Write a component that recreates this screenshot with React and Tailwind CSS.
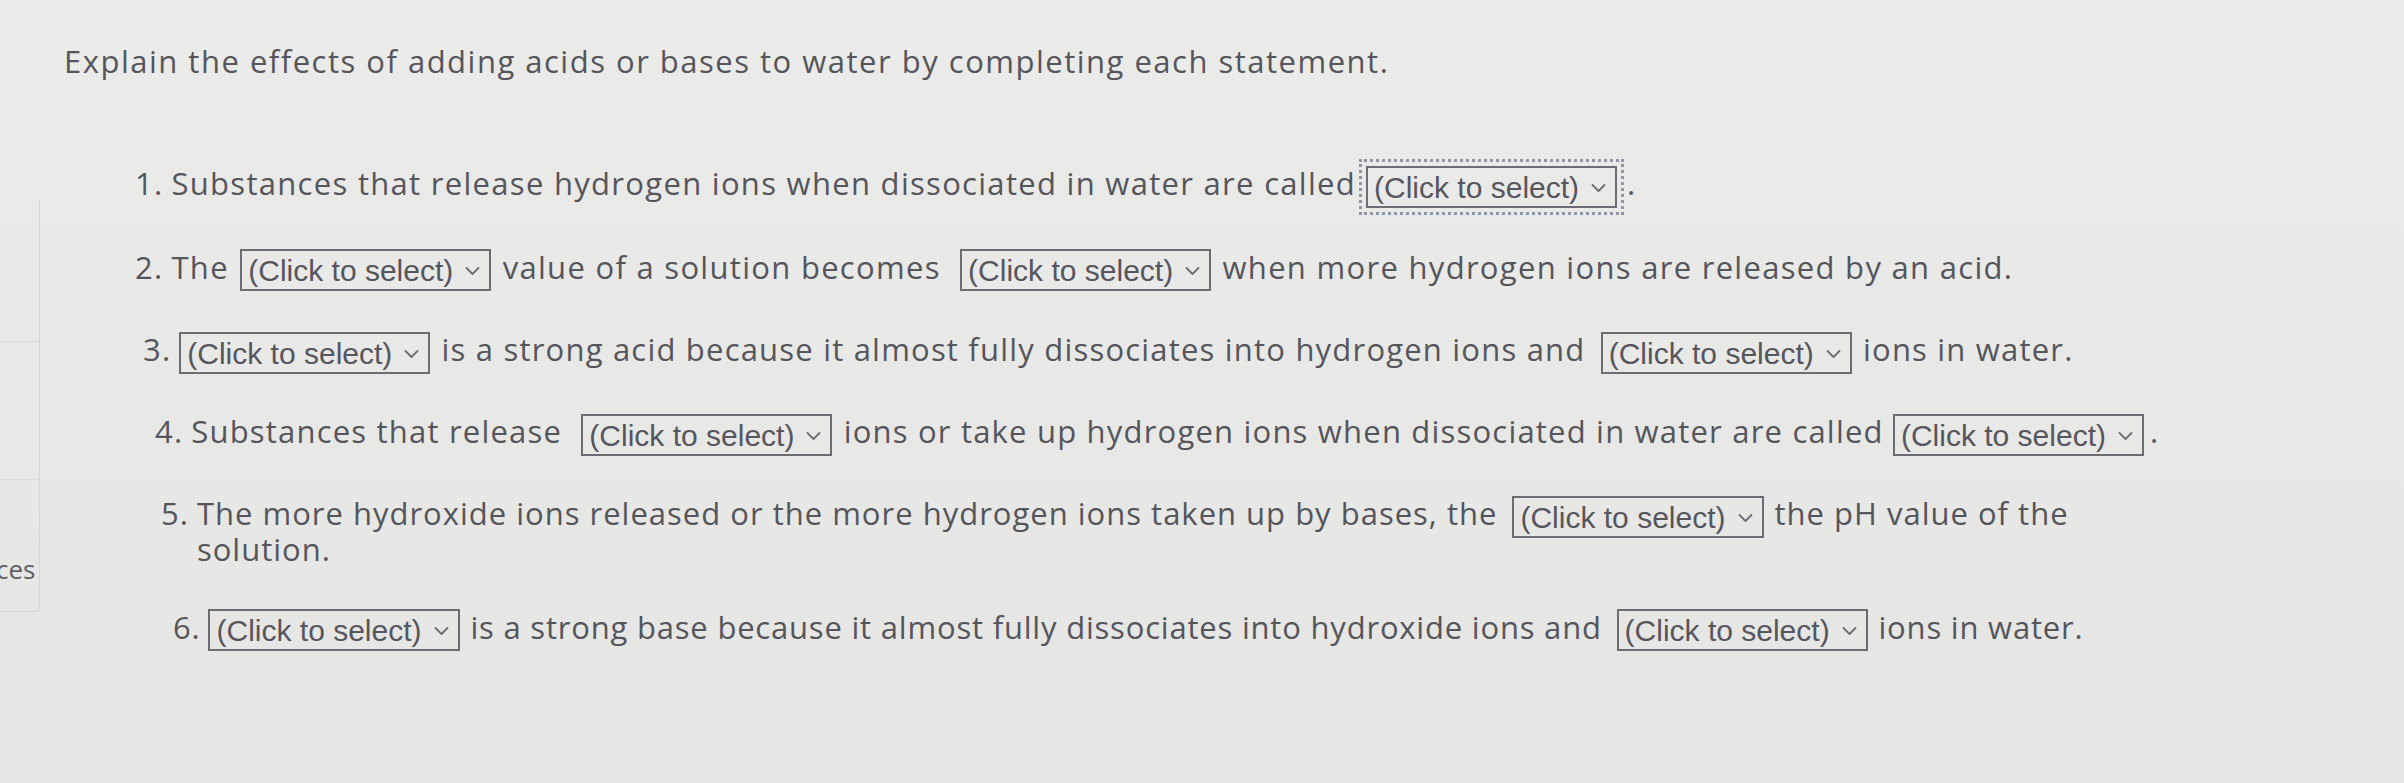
import React from 'react';

// dropdown used inside the statements
const Select = ({ focused = false, className = '' }) => (
  <span
    className={`inline-flex items-center align-middle h-[42px] border-2 border-[#6c6c74] pl-[6px] pr-[9px] font-['Liberation_Sans',Arial,sans-serif] font-normal text-[30px] leading-none tracking-normal text-[#56565e] ${
      focused ? 'outline-[3px] outline-dotted outline-[#8f96a8] outline-offset-[4px]' : ''
    } ${className}`}
  >
    <span className="relative top-[1px]">(Click to select)</span>
    <svg className="ml-[12px] mt-[2px]" width="15" height="10" viewBox="0 0 15 10" fill="none">
      <path d="M1.5 2 L7.5 8 L13.5 2" stroke="#6c6c74" strokeWidth="1.8" strokeLinecap="round" strokeLinejoin="round" />
    </svg>
  </span>
);

const Row = ({ num, children, className = '', textClass = '' }) => (
  <div className={`flex items-baseline ${className}`}>
    <span className="shrink-0 pr-[8px]">{num}.</span>
    <div className={textClass}>{children}</div>
  </div>
);

export default function App() {
  return (
    <div className="w-full h-[783px] overflow-hidden bg-linear-to-b from-[#ebebe9] to-[#e5e5e3] flex font-['Open_Sans',sans-serif] font-medium text-[#55555c] tracking-[1.2px]">
      {/* sidebar peeking from the left */}
      <div className="w-[40px] shrink-0 mt-[200px] h-[412px] flex flex-col border-r border-b border-[#d6d6d4] rounded-br-[4px]">
        <div className="h-[142px] border-b border-[#d9d9d7]" />
        <div className="h-[138px] border-b border-[#d9d9d7]" />
        <div className="flex-1 relative overflow-hidden">
          <span className="absolute left-[-4px] top-[76px] text-[26px] leading-none tracking-normal text-[#5f5f66]">ces</span>
        </div>
      </div>

      <div className="flex-1 pl-[24px]">
        <h1 className="mt-[43px] text-[31px] leading-[36px] font-medium tracking-[1.5px]">
          Explain the effects of adding acids or bases to water by completing each statement.
        </h1>

        <div className="flex flex-col text-[31px] leading-[44px]">
          <Row num="1" className="mt-[82px] pl-[71px] tracking-[1.3px]">
            Substances that release hydrogen ions when dissociated in water are called
            <Select focused className="ml-[10px] mr-[10px]" />.
          </Row>

          <Row num="2" className="mt-[37px] pl-[71px] tracking-[1.3px]">
            The <Select className="mx-[2px]" /> value of a solution becomes{' '}
            <Select className="ml-[10px] mr-[2px]" /> when more hydrogen ions are released by an acid.
          </Row>

          <Row num="3" className="mt-[36px] pl-[79px]">
            <Select className="mr-[2px]" /> is a strong acid because it almost fully dissociates into hydrogen ions and{' '}
            <Select className="ml-[6px] mr-[2px]" /> ions in water.
          </Row>

          <Row num="4" className="mt-[35px] pl-[91px]">
            Substances that release <Select className="ml-[10px] mr-[2px]" /> ions or take up hydrogen ions when
            dissociated in water are called <Select className="mr-[6px]" />.
          </Row>

          <Row num="5" className="mt-[35px] pl-[97px] tracking-[1px]" textClass="w-[1920px] leading-[35px]">
            The more hydroxide ions released or the more hydrogen ions taken up by bases, the{' '}
            <Select className="-my-[6px] ml-[6px] mr-[2px]" /> the pH value of the solution.
          </Row>

          <Row num="6" className="mt-[38px] pl-[109px] tracking-[0.8px]">
            <Select className="mr-[2px]" /> is a strong base because it almost fully dissociates into hydroxide ions and{' '}
            <Select className="ml-[6px] mr-[2px]" /> ions in water.
          </Row>
        </div>
      </div>
    </div>
  );
}
